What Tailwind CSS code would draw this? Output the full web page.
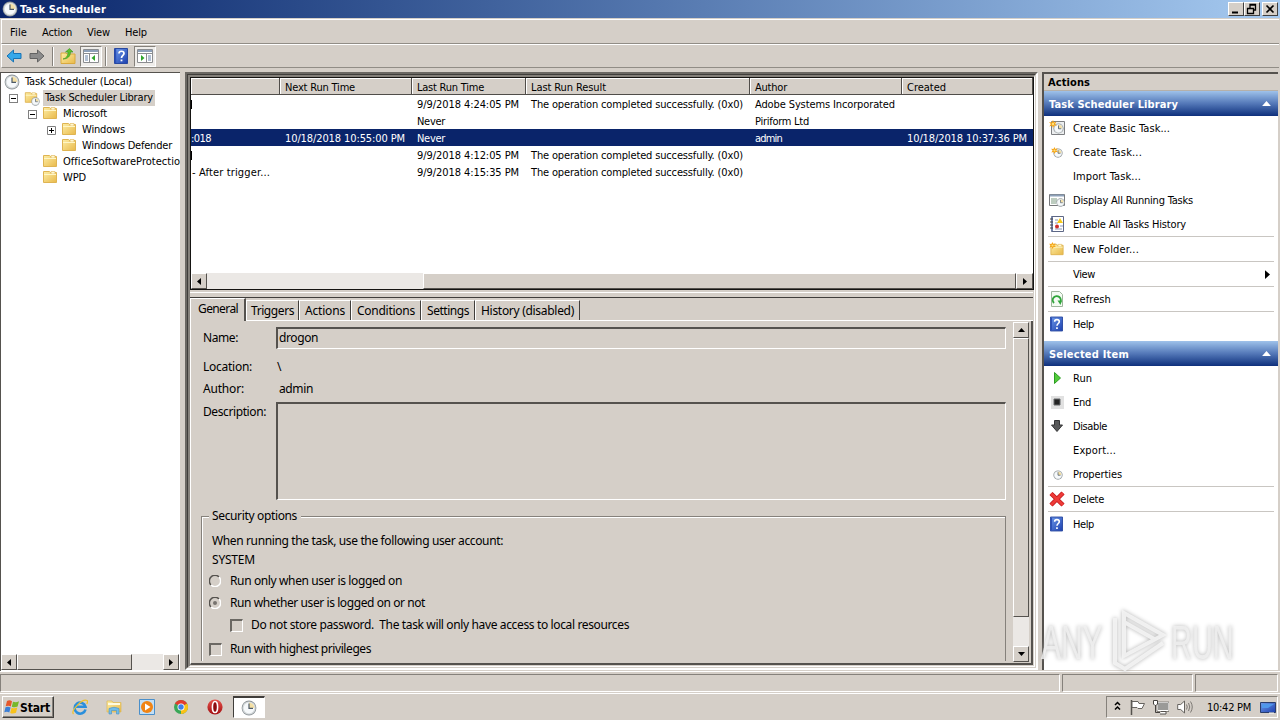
<!DOCTYPE html>
<html lang="en">
<head>
    <meta charset="UTF-8">
    <meta name="viewport" content="width=device-width, initial-scale=1.0">
    <title>Task Scheduler</title>
    <script src="https://cdn.jsdelivr.net/npm/@tailwindcss/browser@4"></script>
</head>
<body data-font="11px 'DejaVu Sans Condensed', 'DejaVu Sans', sans-serif" class="w-[1280px] h-[720px] overflow-hidden flex flex-col bg-[#d5cfc8] text-black text-[11px] leading-4 whitespace-nowrap font-['DejaVu_Sans_Condensed','DejaVu_Sans',sans-serif]">

    <!-- Shared icons -->
    <svg class="absolute size-0">
        <linearGradient id="gFolder" x1="0" y1="0" x2="1" y2="1"><stop offset="0" stop-color="#fdeea6"/><stop offset="1" stop-color="#e9b94a"/></linearGradient>
        <linearGradient id="gBlue" x1="0" y1="0" x2="1" y2="1"><stop offset="0" stop-color="#6f9bea"/><stop offset="1" stop-color="#1c3fae"/></linearGradient>
        <linearGradient id="gRed" x1="0" y1="0" x2="0" y2="1"><stop offset="0" stop-color="#e8554e"/><stop offset="1" stop-color="#a30d10"/></linearGradient>
        <symbol id="clock" viewBox="0 0 16 16">
            <circle cx="8" cy="8" r="7.4" fill="#8d9498"/><circle cx="8" cy="8" r="6.6" fill="#d3d8da"/><circle cx="8" cy="8" r="5.4" fill="#f6f9fb"/>
            <path d="M8 8V2.6A5.4 5.4 0 0 1 13.4 8z" fill="#f3dfa4"/><path d="M8 3.5V8.4H12" fill="none" stroke="#4c5a68" stroke-width="1.2"/>
        </symbol>
        <symbol id="folder" viewBox="0 0 16 16">
            <path d="M1.500 2.500h6l1 1h6v10h-13z" fill="url(#gFolder)" stroke="#dfb452"/><path d="M9 2.500h4v2.500H9z" fill="#fff7d0" stroke="#dfb452" stroke-width=".6"/><path d="M2 5.500h12" stroke="#fff6c6"/>
        </symbol>
        <symbol id="help" viewBox="0 0 14 16">
            <path d="M.5.5h13v15H.5z" fill="url(#gBlue)" stroke="#2848a0"/><path d="M1.500 1v14" stroke="#2b4fb8" stroke-width="1.500"/>
            <path d="M5 5.500C5 2.500 10 2.500 10 5.500 10 7.500 7.500 7.500 7.500 10" fill="none" stroke="#fff" stroke-width="1.700"/><path d="M6.600 11.500h1.800v1.800H6.600z" fill="#fff"/>
        </symbol>
        <symbol id="arrow" viewBox="0 0 16 14"><path d="M1 7 7.500 1V4.500H15V9.500H7.500V13z"/></symbol>
        <symbol id="left" viewBox="0 0 4 7"><path d="M4 0v7L0 3.500z"/></symbol>
        <symbol id="right" viewBox="0 0 4 7"><path d="M0 0v7L4 3.500z"/></symbol>
        <symbol id="up" viewBox="0 0 7 4"><path d="M0 4h7L3.500 0z"/></symbol>
        <symbol id="down" viewBox="0 0 7 4"><path d="M0 0h7L3.500 4z"/></symbol>
        <symbol id="star" viewBox="0 0 10 10"><path d="M5 0 6.300 3 9.500 1.800 7.600 5 10 7.200 6.600 7 5 10 3.800 7 .5 8 2.300 5 0 2.500 3.500 3z" fill="#f5a417"/><circle cx="5" cy="5" r="1.500" fill="#ffe27a"/></symbol>
    </svg>

    <!-- Title bar -->
    <header class="h-[18px] shrink-0 flex items-center pl-[2px] pr-[2px] bg-linear-to-r from-[#0a246a] to-[#a6caf0] text-white">
        <svg class="size-4"><use href="#clock"/></svg>
        <b data-w="86" class="ml-[2px] pt-px">Task Scheduler</b>
        <div class="ml-auto flex text-black">
            <div class="w-4 h-[14px] bg-[#d5cfc8] border border-t-white border-l-white border-r-[#404040] border-b-[#404040]"><svg viewBox="0 0 14 12"><path d="M3 8.500h6v2H3z"/></svg></div>
            <div class="w-4 h-[14px] bg-[#d5cfc8] border border-t-white border-l-white border-r-[#404040] border-b-[#404040]"><svg viewBox="0 0 14 12"><path d="M5 5V1.500h5.500V7H8.500M5 2h6M2.500 5.500h6v5h-6zM2 5.500h7" fill="none" stroke="#000" stroke-width="1.300"/></svg></div>
            <div class="w-4 h-[14px] ml-[2px] bg-[#d5cfc8] border border-t-white border-l-white border-r-[#404040] border-b-[#404040]"><svg viewBox="0 0 14 12"><path d="M3.500 2.500 10.500 9.500M10.500 2.500 3.500 9.500" stroke="#000" stroke-width="1.700"/></svg></div>
        </div>
    </header>

    <!-- Menu -->
    <nav class="h-[25px] shrink-0 mt-px mx-[1px] flex items-center pl-[8px] pt-[3px] border-t border-l border-white border-b border-b-[#918d86]">
        <span data-w="17">File</span>
        <span data-w="30" class="ml-[15px]">Action</span>
        <span data-w="23" class="ml-[15px]">View</span>
        <span data-w="22" class="ml-[15px]">Help</span>
    </nav>

    <!-- Toolbar -->
    <div class="h-[24px] shrink-0 mx-[1px] flex items-center pl-1 border-t border-l border-white border-b border-b-[#918d86]">
        <svg class="w-4 h-[14px] fill-[#35a8ea] stroke-[#1873b4]"><use href="#arrow"/></svg>
        <svg class="w-4 h-[14px] ml-[7px] fill-[#8c8c8c] stroke-[#626262] -scale-x-100"><use href="#arrow"/></svg>
        <div class="w-[2px] h-[19px] ml-[7px] border-l border-[#85817b] border-r border-r-white"></div>
        <svg class="size-4 ml-[6px]" viewBox="0 0 16 16"><path d="M1 5h5l1 1h8v9.500H1z" fill="url(#gFolder)" stroke="#d9a93e"/><path d="M3 11C7 10 8 7 8 4H5.500L9.500.5 13 4H10.500C10.500 8 8 11 3 11z" fill="#5cc02c" stroke="#3a921c" stroke-width=".6"/></svg>
        <div class="w-[22px] h-[21px] ml-1 flex items-center justify-center bg-[#efedea] border border-[#85817b] border-r-white border-b-white">
            <svg class="size-4" viewBox="0 0 16 16"><path d="M.5 1.500h15v13H.5z" fill="#fff" stroke="#8b8d90"/><path d="M1 2h14v2H1z" fill="#8da0b8"/><path d="M1 5.500h14M6.500 6v8" stroke="#8b8d90"/><path d="M2 8h3M2 10h3M2 12h3" stroke="#6682a8"/><path d="M12 7v6L8.500 10z" fill="#2fa62b"/></svg>
        </div>
        <div class="w-[2px] h-[19px] ml-[3px] border-l border-[#85817b] border-r border-r-white"></div>
        <svg class="w-[14px] h-4 ml-[7px]"><use href="#help"/></svg>
        <div class="w-[22px] h-[21px] ml-[6px] flex items-center justify-center bg-[#efedea] border border-[#85817b] border-r-white border-b-white">
            <svg class="size-4" viewBox="0 0 16 16"><path d="M.5 1.500h15v13H.5z" fill="#fff" stroke="#8b8d90"/><path d="M1 2h14v2H1z" fill="#8da0b8"/><path d="M1 5.500h14M9.500 6v8" stroke="#8b8d90"/><path d="M11 8h3M11 10h3M11 12h3" stroke="#6682a8"/><path d="M4 7v6L7.500 10z" fill="#2fa62b"/></svg>
        </div>
    </div>

    <main class="h-[603px] shrink-0 flex pt-[4px]">
        <!-- Tree -->
        <section class="w-[180px] h-[599px] shrink-0 flex flex-col bg-white border-t border-l border-[#55524e] overflow-hidden">
            <div class="pl-[3px] pt-px flex-1">
                <div class="h-4 flex items-center"><svg class="size-4"><use href="#clock"/></svg><span data-w="107" class="ml-[5px]">Task Scheduler (Local)</span></div>
                <div class="h-4 flex items-center pl-[5px]">
                    <div class="size-[9px] border border-[#808080] flex items-center justify-center"><i class="w-[5px] h-px bg-black"></i></div>
                    <svg class="size-4 ml-[6px]" viewBox="0 0 16 16"><use href="#folder" width="14" height="15"/><use href="#clock" x="7" y="7" width="9" height="9"/></svg>
                    <div class="h-4 ml-[3px] px-[2px] bg-[#d5cfc8]"><span data-w="108">Task Scheduler Library</span></div>
                </div>
                <div class="h-4 flex items-center pl-[24px]">
                    <div class="size-[9px] border border-[#808080] flex items-center justify-center"><i class="w-[5px] h-px bg-black"></i></div>
                    <svg class="size-4 ml-[5px] -mt-[2px]"><use href="#folder"/></svg><span data-w="44" class="ml-[5px]">Microsoft</span>
                </div>
                <div class="h-4 flex items-center pl-[43px]">
                    <svg class="size-[9px]" viewBox="0 0 9 9"><path d="M.5.5h8v8h-8z" fill="#fff" stroke="#808080"/><path d="M2 4.500h5M4.500 2v5" stroke="#000"/></svg>
                    <svg class="size-4 ml-[5px] -mt-[2px]"><use href="#folder"/></svg><span data-w="43" class="ml-[5px]">Windows</span>
                </div>
                <div class="h-4 flex items-center pl-[57px]"><svg class="size-4 -mt-[2px]"><use href="#folder"/></svg><span data-w="90" class="ml-[5px]">Windows Defender</span></div>
                <div class="h-4 flex items-center pl-[38px]"><svg class="size-4 -mt-[2px] shrink-0"><use href="#folder"/></svg><span data-w="117" class="ml-[5px]">OfficeSoftwareProtectio</span></div>
                <div class="h-4 flex items-center pl-[38px]"><svg class="size-4 -mt-[2px]"><use href="#folder"/></svg><span data-w="23" class="ml-[5px]">WPD</span></div>
            </div>
            <div class="h-4 mb-px mr-px flex bg-[#ebe8e5]">
                <div class="w-4 flex items-center justify-center bg-[#d5cfc8] border border-t-white border-l-white border-r-[#55524e] border-b-[#55524e]"><svg class="w-1 h-[7px]"><use href="#left"/></svg></div>
                <div class="w-[115px] bg-[#d5cfc8] border border-t-white border-l-white border-r-[#55524e] border-b-[#55524e]"></div>
                <div class="w-4 ml-auto flex items-center justify-center bg-[#d5cfc8] border border-t-white border-l-white border-r-[#55524e] border-b-[#55524e]"><svg class="w-1 h-[7px]"><use href="#right"/></svg></div>
            </div>
        </section>

        <!-- Center -->
        <div class="w-[853px] h-[598px] ml-[5px] shrink-0 border-2 border-t-[#6b6863] border-l-[#6b6863] border-r-white border-b-white">
            <div class="h-full border border-t-[#403e3b] border-l-[#403e3b] border-r-[#d5cfc8] border-b-[#d5cfc8]">
                <div class="h-full flex flex-col border-t-2 border-l-2 border-t-[#85817b] border-l-[#85817b] border-b border-r border-r-white border-b-white">

                    <!-- Task list -->
                    <section class="w-[844px] h-[213px] shrink-0 flex flex-col bg-white border border-[#151412] overflow-hidden">
                        <div class="h-[17px] flex bg-[#d5cfc8] border-b border-[#504d49] *:h-4 *:border-r *:border-[#504d49] *:pl-[5px] *:pt-[2px] *:shadow-[inset_1px_1px_#fff]">
                            <div class="w-[89px]"></div>
                            <div class="w-[132px]"><span data-w="70">Next Run Time</span></div>
                            <div class="w-[114px]"><span data-w="67">Last Run Time</span></div>
                            <div class="w-[224px]"><span data-w="75">Last Run Result</span></div>
                            <div class="w-[152px]"><span data-w="32">Author</span></div>
                            <div class="w-[131px]"><span data-w="39">Created</span></div>
                        </div>
                        <div class="h-[178px] grid grid-cols-[88px_132px_114px_224px_152px_132px] auto-rows-[17px] content-start *:h-[17px] *:pl-[6px] *:pt-[2px]">
                            <div class="pl-0! pt-[5px]!"><i class="block w-px h-[9px] bg-black"></i></div><div></div><div><span data-w="102">9/9/2018 4:24:05 PM</span></div><div><span data-w="212">The operation completed successfully. (0x0)</span></div><div><span data-w="140">Adobe Systems Incorporated</span></div><div></div>
                            <div></div><div></div><div><span data-w="28">Never</span></div><div></div><div><span data-w="54">Piriform Ltd</span></div><div></div>
                            <div class="col-span-6 pl-0! grid grid-cols-subgrid bg-[#0a246a] text-white *:pl-[6px]">
                                <div class="pl-0!"><span data-w="20">:018</span></div><div><span data-w="120">10/18/2018 10:55:00 PM</span></div><div><span data-w="28">Never</span></div><div></div><div><span data-w="27">admin</span></div><div><span data-w="120">10/18/2018 10:37:36 PM</span></div>
                            </div>
                            <div class="pl-0! pt-[5px]!"><i class="block w-px h-[9px] bg-black"></i></div><div></div><div><span data-w="102">9/9/2018 4:12:05 PM</span></div><div><span data-w="212">The operation completed successfully. (0x0)</span></div><div></div><div></div>
                            <div class="pl-px!"><span data-w="78">- After trigger...</span></div><div></div><div><span data-w="102">9/9/2018 4:15:35 PM</span></div><div><span data-w="212">The operation completed successfully. (0x0)</span></div><div></div><div></div>
                        </div>
                        <div class="h-4 flex bg-[#ebe8e5]">
                            <div class="w-4 flex items-center justify-center bg-[#d5cfc8] border border-t-white border-l-white border-r-[#55524e] border-b-[#55524e]"><svg class="w-1 h-[7px]"><use href="#left"/></svg></div>
                            <div class="w-[593px] ml-auto bg-[#d5cfc8] border border-t-white border-l-white border-r-[#55524e] border-b-[#55524e]"></div>
                            <div class="w-[17px] flex items-center justify-center bg-[#d5cfc8] border border-t-white border-l-white border-r-[#55524e] border-b-[#55524e]"><svg class="w-1 h-[7px]"><use href="#right"/></svg></div>
                        </div>
                    </section>

                    <!-- Task details -->
                    <section data-font="12px 'Noto Sans', 'Open Sans', sans-serif" class="w-[843px] h-[374px] flex flex-col mt-[2px] border-t border-white pt-[4px] text-[12px] font-['Noto_Sans','Open_Sans',sans-serif]">
                        <div class="h-[24px] shrink-0 flex items-end border-t border-[#403e3b]">
                            <div class="w-[56px] h-[23px] pl-[7px] pt-[2px] border-t border-l border-white border-r-2 border-r-[#55524e]"><span data-w="40">General</span></div>
                            <div class="flex flex-1 border-b border-white *:h-5 *:border-t *:border-l *:border-white *:border-r *:border-r-[#403e3b] *:pl-1 *:pt-[2px]">
                                <div class="w-[53px]"><span data-w="43">Triggers</span></div>
                                <div class="w-[52px] pl-[5px]!"><span data-w="40">Actions</span></div>
                                <div class="w-[70px] pl-[5px]!"><span data-w="58">Conditions</span></div>
                                <div class="w-[54px] pl-[5px]!"><span data-w="42">Settings</span></div>
                                <div class="w-[105px] pl-[5px]!"><span data-w="93">History (disabled)</span></div>
                            </div>
                        </div>
                        <div class="h-[344px] flex border-l border-white border-r-2 border-r-[#55524e] border-b-2 border-b-[#55524e]">
                            <div class="w-[822px] h-[340px] overflow-hidden pl-[10px]">
                                <div class="mt-[6px] flex pl-[2px]">
                                    <span data-w="35" class="mt-[3px]">Name:</span>
                                    <div class="w-[730px] h-[22px] ml-auto mr-[7px] pl-[1px] pt-px border-t-2 border-l-2 border-[#55524e] border-b border-r border-b-white border-r-white"><span data-w="39">drogon</span></div>
                                </div>
                                <div class="mt-[10px] pl-[2px] grid grid-cols-[74px_1fr] auto-rows-[22px]">
                                    <span data-w="49" class="justify-self-start">Location:</span><span class="justify-self-start">\</span>
                                    <span data-w="41" class="justify-self-start">Author:</span><span data-w="34" class="justify-self-start ml-[2px]">admin</span>
                                </div>
                                <div class="mt-px flex pl-[2px]">
                                    <span data-w="63">Description:</span>
                                    <div class="w-[730px] h-[98px] -mt-[2px] ml-auto mr-[7px] border-t-2 border-l-2 border-[#55524e] border-b border-r border-b-white border-r-white"></div>
                                </div>
                                <fieldset class="w-[805px] h-[190px] mt-[16px] pl-[10px] border border-[#85817b] shadow-[inset_1px_1px_#fff]">
                                    <div class="-mt-[9px] -ml-[3px] px-[3px] w-[92px] bg-[#d5cfc8]"><span data-w="85">Security options</span></div>
                                    <div class="mt-[9px]"><span data-w="291">When running the task, use the following user account:</span></div>
                                    <div class="mt-[3px]"><span data-w="43">SYSTEM</span></div>
                                    <div class="mt-[5px] -ml-[3px] flex items-center"><svg class="size-3" viewBox="0 0 12 12"><path d="M2 10A5.500 5.500 0 0 1 10 2" fill="none" stroke="#55524e" stroke-width="1.500"/><path d="M2 10A5.500 5.500 0 0 0 10 2" fill="none" stroke="#fff" stroke-width="1.500"/></svg><span data-w="172" class="ml-[9px]">Run only when user is logged on</span></div>
                                    <div class="mt-[6px] -ml-[3px] flex items-center"><svg class="size-3" viewBox="0 0 12 12"><path d="M2 10A5.500 5.500 0 0 1 10 2" fill="none" stroke="#55524e" stroke-width="1.500"/><path d="M2 10A5.500 5.500 0 0 0 10 2" fill="none" stroke="#fff" stroke-width="1.500"/><circle cx="6" cy="6" r="2" fill="#77736e"/></svg><span data-w="195" class="ml-[9px]">Run whether user is logged on or not</span></div>
                                    <div class="mt-[6px] ml-[18px] flex items-center"><i class="size-[13px] border-t-2 border-l-2 border-[#6b6863] border-b border-r border-b-white border-r-white"></i><span data-w="378" class="ml-[8px]">Do not store password.&nbsp; The task will only have access to local resources</span></div>
                                    <div class="mt-[8px] -ml-[3px] flex items-center"><i class="size-[13px] border-t-2 border-l-2 border-[#6b6863] border-b border-r border-b-white border-r-white"></i><span data-w="141" class="ml-[8px]">Run with highest privileges</span></div>
                                </fieldset>
                            </div>
                            <div class="w-4 h-[340px] mt-px flex flex-col bg-[#ebe8e5]">
                                <div class="h-4 flex items-center justify-center bg-[#d5cfc8] border border-t-white border-l-white border-r-[#55524e] border-b-[#55524e]"><svg class="w-[7px] h-1"><use href="#up"/></svg></div>
                                <div class="h-[279px] bg-[#d5cfc8] border border-t-white border-l-white border-r-[#55524e] border-b-[#55524e]"></div>
                                <div class="h-4 mt-auto flex items-center justify-center bg-[#d5cfc8] border border-t-white border-l-white border-r-[#55524e] border-b-[#55524e]"><svg class="w-[7px] h-1"><use href="#down"/></svg></div>
                            </div>
                        </div>
                    </section>
                </div>
            </div>
        </div>

        <!-- Actions -->
        <aside class="w-[236px] h-[598px] ml-[4px] shrink-0 bg-white border-t-2 border-l-2 border-[#55524e] *:data-row:h-6 *:data-row:flex *:data-row:items-center *:data-row:pl-[5px] *:data-row:gap-2 **:data-w:pt-[2px]">
            <div class="h-[17px] flex items-center pl-1 bg-[#d5cfc8] border-b border-[#b5b0a9]"><b data-w="42">Actions</b></div>
            <div class="h-[25px] pl-[5px] pr-[7px] flex items-center justify-between text-white bg-linear-to-b from-[#9fc2ea] via-[#5478b8] to-[#0f2f7c]"><b data-w="129">Task Scheduler Library</b><svg class="w-[9px] h-[5px] fill-white" viewBox="0 0 7 4"><path d="M0 4h7L3.500 0z"/></svg></div>
            <div data-row><svg class="size-4" viewBox="0 0 16 16"><path d="M2.500 1.500h13v13h-13z" fill="#eceeef" stroke="#7d7f82"/><use href="#clock" x="4" y="3" width="11" height="11"/><use href="#star" width="8" height="8"/></svg><span data-w="97">Create Basic Task...</span></div>
            <div data-row><svg class="size-4" viewBox="0 0 16 16"><use href="#clock" x="4" y="4" width="10" height="10"/><use href="#star" x="2" y="3" width="7" height="7"/></svg><span data-w="69">Create Task...</span></div>
            <div data-row><i class="size-4"></i><span data-w="68">Import Task...</span></div>
            <div data-row><svg class="size-4" viewBox="0 0 16 16"><path d="M.5 2.500h15v11H.5z" fill="#fff" stroke="#77797c"/><path d="M1 3.500h14" stroke="#8da0b8" stroke-width="2"/><path d="M2 7h6M2 9h6M2 11h5" stroke="#7a9a80"/><use href="#clock" x="7" y="6" width="9" height="9"/></svg><span data-w="120">Display All Running Tasks</span></div>
            <div data-row><svg class="size-4" viewBox="0 0 16 16"><path d="M2.500.5h12v15h-12z" fill="#fff" stroke="#5d6785"/><path d="M3 1v14" stroke="#7484ad" stroke-width="2"/><path d="M1 3h3M1 6h3M1 9h3M1 12h3" stroke="#444"/><path d="M6 4h3M6 7h3M11 10h3M6 13h7" stroke="#8b96b8"/><path d="M11 2 14 7H8z" fill="#f6c915"/><circle cx="8" cy="10.500" r="2" fill="#ce2f2b"/></svg><span data-w="113">Enable All Tasks History</span></div>
            <hr class="mx-1 border-[#c9c6c2]">
            <div data-row><svg class="size-4" viewBox="0 0 16 16"><use href="#folder" y="1" width="16" height="15"/><use href="#star" x="0" y="1" width="7" height="7"/></svg><span data-w="66">New Folder...</span></div>
            <hr class="mx-1 border-[#c9c6c2]">
            <div data-row><i class="size-4"></i><span data-w="22">View</span><svg class="w-[5px] h-[9px] ml-auto mr-[8px]" viewBox="0 0 4 7"><path d="M0 0v7L4 3.500z"/></svg></div>
            <hr class="mx-1 border-[#c9c6c2]">
            <div data-row><svg class="size-4" viewBox="0 0 16 16"><path d="M2.500.5h8l3 3v12h-11z" fill="#f4fbf3" stroke="#9fb59d"/><path d="M5 12A4 4 0 1 1 11 11.500" fill="none" stroke="#2fa53a" stroke-width="1.900"/><path d="M8.500 9.500H13L11.500 14z" fill="#2fa53a"/></svg><span data-w="38">Refresh</span></div>
            <hr class="mx-1 border-[#c9c6c2]">
            <div data-row><svg class="w-4 h-4 pl-px"><use href="#help" width="13" height="16"/></svg><span data-w="21">Help</span></div>
            <div class="h-[25px] mt-[5px] pl-[5px] pr-[7px] flex items-center justify-between text-white bg-linear-to-b from-[#9fc2ea] via-[#5478b8] to-[#0f2f7c]"><b data-w="80">Selected Item</b><svg class="w-[9px] h-[5px] fill-white" viewBox="0 0 7 4"><path d="M0 4h7L3.500 0z"/></svg></div>
            <div data-row><svg class="size-4" viewBox="0 0 16 16"><path d="M5.500 2.500 11.500 8 5.500 13.500z" fill="#51cb3a" stroke="#2c9c22"/></svg><span data-w="19">Run</span></div>
            <div data-row><svg class="size-4" viewBox="0 0 16 16"><path d="M2 2h13v13H2z" fill="#e1e1e1"/><path d="M5 5h6v6H5z" fill="#242424" stroke="#66696b"/></svg><span data-w="18">End</span></div>
            <div data-row><svg class="size-4" viewBox="0 0 16 16"><path d="M5.500 2.500h5v4.500h3L8 13.500 2.500 7h3z" fill="#58595a" stroke="#343536"/></svg><span data-w="34">Disable</span></div>
            <div data-row><i class="size-4"></i><span data-w="43">Export...</span></div>
            <div data-row><svg class="size-4" viewBox="0 0 16 16"><use href="#clock" x="4" y="4" width="10" height="10"/></svg><span data-w="49">Properties</span></div>
            <hr class="mx-1 border-[#c9c6c2]">
            <div data-row><svg class="size-4" viewBox="0 0 16 16"><path d="M2 2.500 14 14M14 2 2 14" stroke="#bd1518" stroke-width="4.500"/><path d="M2 2.500 14 14M14 2 2 14" stroke="#ee3b38" stroke-width="3"/></svg><span data-w="31">Delete</span></div>
            <hr class="mx-1 border-[#c9c6c2]">
            <div data-row><svg class="w-4 h-4 pl-px"><use href="#help" width="13" height="16"/></svg><span data-w="21">Help</span></div>
        </aside>
    </main>

    <!-- Status bar -->
    <footer class="h-[22px] shrink-0 pt-[2px] pb-px flex gap-[2px] border-t border-white *:h-[18px] *:border *:border-t-[#85817b] *:border-l-[#85817b] *:border-r-white *:border-b-white">
        <div class="w-[1060px]"></div>
        <div class="w-[131px]"></div>
        <div class="w-[83px]"></div>
    </footer>

    <!-- Taskbar -->
    <div class="h-[27px] shrink-0 flex items-center pl-[2px] pr-[2px] border-t border-white">
        <div class="w-[52px] h-[22px] flex items-center pl-px border border-t-white border-l-white border-r-[#403e3b] border-b-[#403e3b] shadow-[inset_-1px_-1px_#85817b]">
            <svg class="size-4" viewBox="0 0 16 16"><path d="M3 2Q5.500.5 8 2.200L6.800 7.500Q4.500 6 1.700 7.300z" fill="#e6582b"/><path d="M9 2.800Q12 4 15 2.300L13.600 7.500Q11 9 7.800 7.800z" fill="#77b82b"/><path d="M1.500 8.300Q4 7 6.600 8.500L5.300 13.500Q3 12 .3 13.300z" fill="#3c7fd6"/><path d="M7.600 8.800Q10.500 10 13.300 8.500L12 13.700Q9 15.200 6.200 14z" fill="#f8c21b"/></svg>
            <b data-font="12px 'DejaVu Sans Condensed', 'DejaVu Sans', sans-serif" data-w="30" class="pt-px text-[12px]">Start</b>
        </div>
        <!-- Internet Explorer -->
        <svg class="size-4 ml-[18px]" viewBox="0 0 16 16"><path d="M13.500 10.500A5.500 5.500 0 1 1 13.500 7.800H4" fill="none" stroke="#2a8fdc" stroke-width="2.600"/><path d="M1.500 15C-1.500 12 10-.5 15 1.500 16 2.300 15.300 4 14.800 5" fill="none" stroke="#efc22d" stroke-width="1.300"/></svg>
        <!-- Explorer -->
        <svg class="size-4 ml-[18px]" viewBox="0 0 16 16"><path d="M1 2h5l1 1.500h8V13H1z" fill="url(#gFolder)" stroke="#dcb755" stroke-width=".7"/><path d="M2 4h12v2H2z" fill="#fffbe0"/><path d="M3 15V9.500Q8 7 13 9.500V15H10.500V11.500h-5V15z" fill="#71bce9" stroke="#4491c4" stroke-width=".6"/></svg>
        <!-- Media player -->
        <svg class="size-4 ml-[17px]" viewBox="0 0 16 16"><path d="M.5.5h15v15H.5z" fill="#c3dff5" stroke="#4a8fca"/><circle cx="8" cy="8" r="6" fill="#f18414"/><path d="M6 4.500v7L11.500 8z" fill="#fff"/></svg>
        <!-- Chrome -->
        <svg class="size-4 ml-[18px]" viewBox="0 0 16 16"><circle cx="8" cy="8" r="7" fill="#3aa757"/><path d="M8 8 1.940 4.500A7 7 0 0 1 14.060 4.500z" fill="#e33b2e"/><path d="M8 8 14.060 4.500A7 7 0 0 1 8 15z" fill="#fbc116"/><circle cx="8" cy="8" r="3.500" fill="#fff"/><circle cx="8" cy="8" r="2.700" fill="#3f7fe8"/></svg>
        <!-- Opera -->
        <svg class="size-4 ml-[18px]" viewBox="0 0 16 16"><circle cx="8" cy="8" r="7.600" fill="url(#gRed)"/><ellipse cx="8" cy="8" rx="2.600" ry="5.500" fill="#8e0c0f" stroke="#fff" stroke-width="1.600"/></svg>
        <div class="w-[32px] h-[22px] ml-[10px] flex items-center justify-center bg-white border-t-2 border-l border-[#403e3b] border-r border-b border-r-white border-b-white"><svg class="size-4"><use href="#clock"/></svg></div>

        <div class="w-[172px] h-[22px] ml-auto flex items-center pl-[7px] border border-[#85817b] border-r-white border-b-white">
            <svg class="w-[7px] h-[10px] -mt-[3px]" viewBox="0 0 7 10"><path d="M1 4 3.500 1.500 6 4M1 8.500 3.500 6 6 8.500" fill="none" stroke="#000" stroke-width="1.500"/></svg>
            <svg class="size-4 ml-[8px]" viewBox="0 0 16 16"><path d="M2.500 1v15" stroke="#55524e" stroke-width="1.500"/><path d="M3 2.500h6l1 2h5.500L13 9.500H9l-1-1H3z" fill="#fff" stroke="#66635f"/></svg>
            <svg class="size-4 ml-[8px]" viewBox="0 0 16 16"><path d="M4.500 3.500h11v8h-11z" fill="#9a9a98" stroke="#fff"/><path d="M4 3h12v9.500H4z" fill="none" stroke="#55524e" stroke-width=".6"/><path d="M8 12.500h5V15H7" fill="#fff" stroke="#55524e"/><path d="M2.500 6v7.500H7" fill="none" stroke="#45423f"/><path d="M.5 1.500h4V5L3 6.500H2L.5 5z" fill="#fff" stroke="#45423f"/></svg>
            <svg class="size-4 ml-[8px]" viewBox="0 0 16 16"><path d="M.7 5.500h3L7.500 2v12L3.700 10.500h-3z" fill="#fff" stroke="#66635f"/><path d="M9.500 5.500Q11 8 9.500 10.500M11.500 4Q14 8 11.500 12M13.500 2.500Q17 8 13.500 13.500" fill="none" stroke="#7d7974"/></svg>
            <span data-w="44" class="ml-[14px] pt-px">10:42 PM</span>
            <svg class="w-4 h-[13px] ml-[9px]" viewBox="0 0 16 13"><path d="M.5 1.500h15v10H.5z" fill="url(#gBlue)" stroke="#283d6c"/><path d="M2 3h12l-6 4H2z" fill="#4f97ea"/><path d="M9 12h5" stroke="#fff"/></svg>
        </div>
    </div>

    <!-- ANY.RUN overlay -->
    <div class="absolute left-[1041px] top-[608px] w-[194px] h-[64px] flex items-center justify-between text-[49px] leading-none font-['Liberation_Sans',sans-serif] text-[#f1f1f1]/85 drop-shadow-[0_0_2px_#aaa]">
        <span class="w-[62px] pt-1"><span class="inline-block origin-left scale-x-[.61]">ANY</span></span>
        <svg class="w-[62px] h-[64px]" viewBox="0 0 62 64" fill="none" stroke="#f4f4f4" stroke-opacity=".9" stroke-width="4"><path d="M18 5 57 27 18 48zM9 10v45l10 6 38-26M18 14 50 32"/></svg>
        <span class="w-[64px] pt-1"><span class="inline-block origin-left scale-x-[.59]">RUN</span></span>
    </div>

    <script>
        // Letter spacing that gives each label its width in the classic UI font
        const ctx = document.createElement('canvas').getContext('2d');

        document.querySelectorAll('[data-w]').forEach((el) => {
            const font = el.closest('[data-font]').dataset.font;
            ctx.font = el.tagName === 'B' ? `bold ${font}` : font;
            const natural = ctx.measureText(el.textContent).width;
            const spacing = (Number(el.dataset.w) - natural) / el.textContent.length;
            el.style.letterSpacing = `${spacing.toFixed(3)}px`;
        });
    </script>
</body>
</html>
